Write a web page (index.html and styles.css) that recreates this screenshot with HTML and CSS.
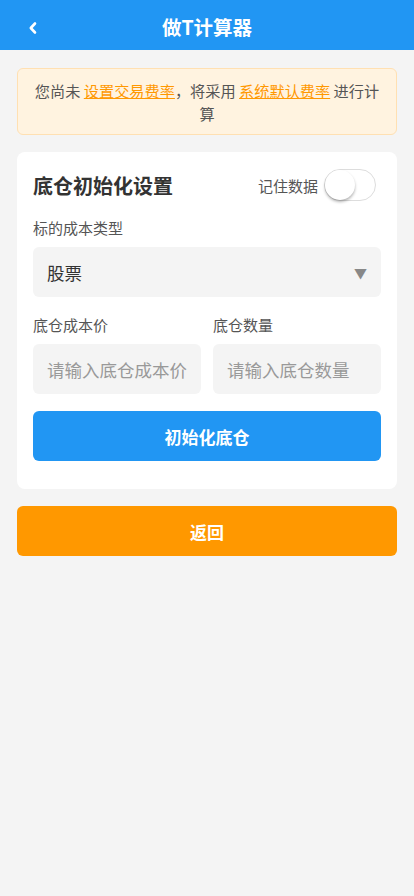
FILE: index.html
```html
<!DOCTYPE html>
<html lang="zh-CN">
<head>
<meta charset="utf-8">
<title>做T计算器</title>
<link rel="stylesheet" href="styles.css">
</head>
<body>
<header class="topbar">
  <span class="back">
    <svg width="10" height="14" viewBox="0 0 10 14"><path d="M7 2.5 L2.8 7 L7 11.5" fill="none" stroke="#fff" stroke-width="2.6" stroke-linecap="round" stroke-linejoin="round"/></svg>
  </span>
  <h1 class="title">做T计算器</h1>
</header>
<main class="page">
  <div class="notice">您尚未 <a class="link">设置交易费率</a>，将采用 <a class="link">系统默认费率</a> 进行计算</div>
  <section class="card">
    <div class="card-head">
      <h2 class="card-title">底仓初始化设置</h2>
      <div class="remember">
        <span class="remember-label">记住数据</span>
        <span class="switch"><span class="knob"></span></span>
      </div>
    </div>
    <div class="field">
      <div class="label">标的成本类型</div>
      <div class="select"><span>股票</span><span class="arrow">▼</span></div>
    </div>
    <div class="row">
      <div class="field">
        <div class="label">底仓成本价</div>
        <input class="input" placeholder="请输入底仓成本价">
      </div>
      <div class="field">
        <div class="label">底仓数量</div>
        <input class="input" placeholder="请输入底仓数量">
      </div>
    </div>
    <button class="btn btn-blue">初始化底仓</button>
  </section>
  <button class="btn btn-orange">返回</button>
</main>
</body>
</html>
```
FILE: styles.css
```css
* { box-sizing: border-box; }
html, body { margin: 0; padding: 0; }
body {
  background: #f4f4f4;
  font-family: "Noto Sans CJK SC", "Noto Sans", sans-serif;
  color: #333;
  width: 414px;
  min-height: 896px;
}
.topbar {
  height: 50px;
  background: #2196f3;
  display: flex;
  align-items: center;
  justify-content: center;
  position: relative;
}
.back {
  position: absolute;
  left: 28px;
  top: 21px;
  display: flex;
}
.title {
  margin: 0;
  color: #fff;
  font-size: 19.5px;
  font-weight: 700;
  line-height: 1;
  padding-top: 4px;
}
.page {
  padding: 18px 17px;
  display: flex;
  flex-direction: column;
  gap: 17px;
}
.notice {
  background: #fff3e0;
  border: 1px solid #ffe0b2;
  border-radius: 6px;
  padding: 10px 12px 9px;
  font-size: 15.2px;
  line-height: 23px;
  color: #555;
  text-align: center;
}
.link {
  color: #ff9800;
  text-decoration: underline;
}
.card {
  background: #fff;
  border-radius: 8px;
  padding: 16px 16px 28px;
  display: flex;
  flex-direction: column;
}
.card-head {
  display: flex;
  align-items: center;
  justify-content: space-between;
  height: 34px;
  margin-bottom: 15px;
}
.card-title {
  margin: 0;
  font-size: 20px;
  font-weight: 700;
  color: #333;
}
.remember {
  display: flex;
  align-items: center;
  gap: 6px;
  margin-right: 5px;
}
.remember-label {
  font-size: 15px;
  color: #555;
}
.switch {
  width: 52px;
  height: 32px;
  border-radius: 16px;
  border: 1px solid #ddd;
  background: #fff;
  position: relative;
  display: inline-block;
}
.knob {
  position: absolute;
  left: 0;
  top: 0;
  width: 30px;
  height: 30px;
  border-radius: 50%;
  background: #fff;
  box-shadow: 0 2px 3px rgba(0,0,0,0.3);
}
.field {
  display: flex;
  flex-direction: column;
  margin-bottom: 17px;
  min-width: 0;
}
.label {
  font-size: 15px;
  color: #555;
  line-height: 22px;
  margin-bottom: 8px;
}
.select {
  height: 50px;
  background: #f4f4f4;
  border-radius: 6px;
  display: flex;
  align-items: center;
  justify-content: space-between;
  padding: 0 14px;
  font-size: 17.5px;
  color: #333;
}
.arrow {
  font-size: 13px;
  color: #888;
}
.row {
  display: grid;
  grid-template-columns: 1fr 1fr;
  gap: 12px;
}
.input {
  height: 50px;
  width: 100%;
  background: #f4f4f4;
  border: none;
  border-radius: 6px;
  padding: 0 14px;
  font-family: inherit;
  font-size: 17.5px;
  color: #333;
  outline: none;
}
.input::placeholder { color: #999; }
.btn {
  height: 50px;
  border: none;
  border-radius: 6px;
  color: #fff;
  font-family: inherit;
  font-size: 17px;
  font-weight: 700;
  width: 100%;
}
.btn-blue { background: #2196f3; }
.btn-orange { background: #ff9800; }
```
